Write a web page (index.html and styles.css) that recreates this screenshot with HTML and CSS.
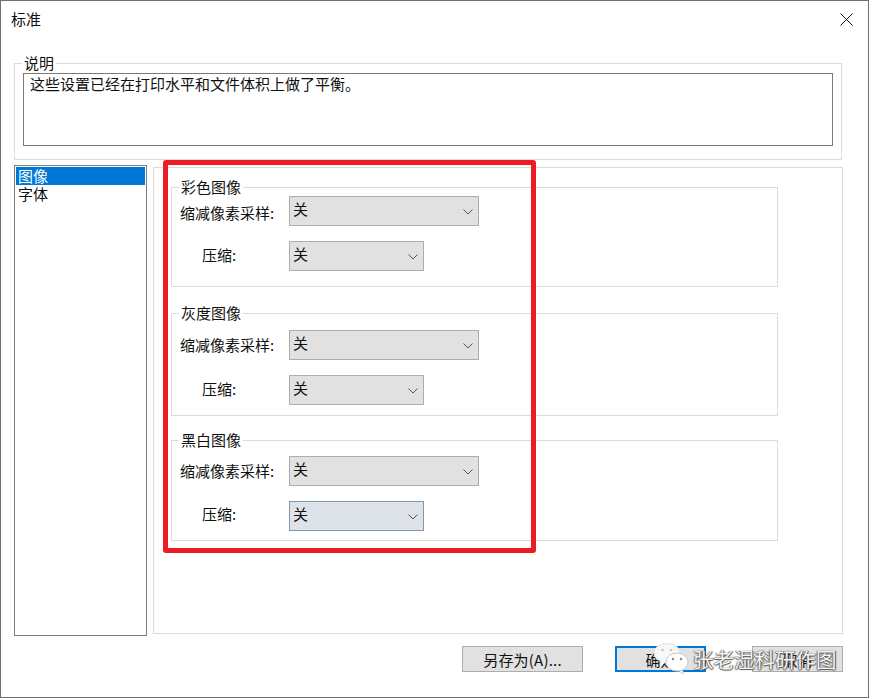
FILE: index.html
```html
<!DOCTYPE html>
<html lang="zh-CN">
<head>
<meta charset="utf-8">
<title>标准</title>
<link rel="stylesheet" href="styles.css">
</head>
<body>
<div class="window">
  <header class="titlebar">
    <span class="title">标准</span>
    <svg class="close" width="13" height="13" viewBox="0 0 13 13"><path d="M0.5 0.5L12.5 12.5M12.5 0.5L0.5 12.5" stroke="#111" stroke-width="1" fill="none"/></svg>
  </header>

  <section class="box desc">
    <div class="legend">说明</div>
    <div class="desc-text">这些设置已经在打印水平和文件体积上做了平衡。</div>
  </section>

  <div class="main">
    <ul class="list">
      <li class="item selected">图像</li>
      <li class="item">字体</li>
    </ul>
    <div class="panel">
      <section class="box group group-one">
        <div class="legend">彩色图像</div>
        <div class="row">
          <span class="label">缩减像素采样:</span>
          <div class="select wide"><span class="value">关</span><svg class="chev" width="10" height="6" viewBox="0 0 10 6"><path d="M0.5 0.5L5 5L9.5 0.5" stroke="#555" fill="none"/></svg></div>
        </div>
        <div class="row">
          <span class="label short">压缩:</span>
          <div class="select"><span class="value">关</span><svg class="chev" width="10" height="6" viewBox="0 0 10 6"><path d="M0.5 0.5L5 5L9.5 0.5" stroke="#555" fill="none"/></svg></div>
        </div>
      </section>
      <section class="box group group-two">
        <div class="legend">灰度图像</div>
        <div class="row">
          <span class="label">缩减像素采样:</span>
          <div class="select wide"><span class="value">关</span><svg class="chev" width="10" height="6" viewBox="0 0 10 6"><path d="M0.5 0.5L5 5L9.5 0.5" stroke="#555" fill="none"/></svg></div>
        </div>
        <div class="row">
          <span class="label short">压缩:</span>
          <div class="select"><span class="value">关</span><svg class="chev" width="10" height="6" viewBox="0 0 10 6"><path d="M0.5 0.5L5 5L9.5 0.5" stroke="#555" fill="none"/></svg></div>
        </div>
      </section>
      <section class="box group group-three">
        <div class="legend">黑白图像</div>
        <div class="row">
          <span class="label">缩减像素采样:</span>
          <div class="select wide"><span class="value">关</span><svg class="chev" width="10" height="6" viewBox="0 0 10 6"><path d="M0.5 0.5L5 5L9.5 0.5" stroke="#555" fill="none"/></svg></div>
        </div>
        <div class="row">
          <span class="label short">压缩:</span>
          <div class="select hover"><span class="value">关</span><svg class="chev" width="10" height="6" viewBox="0 0 10 6"><path d="M0.5 0.5L5 5L9.5 0.5" stroke="#555" fill="none"/></svg></div>
        </div>
      </section>
    </div>
  </div>

  <footer class="footer">
    <button class="btn save">另存为(A)...</button>
    <button class="btn ok">确定</button>
    <button class="btn cancel">取消</button>
  </footer>

  <div class="highlight"></div>

  <div class="watermark">
    <svg class="wm-icon" width="38" height="32" viewBox="0 0 38 32">
      <ellipse cx="15" cy="10" rx="13" ry="9.5" fill="#f8f8f8" stroke="#e2e2e2"/>
      <path d="M9 18L8 24L14 19Z" fill="#f8f8f8"/>
      <circle cx="10.5" cy="7" r="1.3" fill="#c4c4c4"/>
      <circle cx="19" cy="7" r="1.3" fill="#c4c4c4"/>
      <path d="M30 26L32 31L25 27Z" fill="#fff" stroke="#c4c4c4" stroke-width="0.7"/>
      <ellipse cx="25" cy="19" rx="11" ry="9" fill="#fff" stroke="#c8c8c8"/>
      <circle cx="21" cy="16" r="1.2" fill="#888"/>
      <circle cx="29" cy="16" r="1.2" fill="#888"/>
    </svg>
    <span class="wm-text">张老湿科研作图</span>
  </div>
</div>
</body>
</html>
```

FILE: styles.css
```css
* { box-sizing: border-box; }
html, body { margin: 0; padding: 0; }
body {
  font-family: "Noto Sans CJK SC", "Liberation Sans", sans-serif;
  font-size: 15px;
  color: #111;
  background: #fff;
}
.window {
  position: relative;
  width: 869px;
  height: 698px;
  border: 1px solid #6f6f6f;
  background: #fff;
  overflow: hidden;
  display: flex;
  flex-direction: column;
}
.titlebar {
  height: 62px;
  padding: 10px 15px 0 10px;
  display: flex;
  justify-content: space-between;
  align-items: flex-start;
}
.title { line-height: 16px; }
.close { margin-top: 2px; }
.box { border: 1px solid #dcdcdc; }
.legend {
  width: fit-content;
  height: 16px;
  line-height: 16px;
  margin: -9px 0 0 7px;
  padding: 0 2px;
  background: #fff;
}
.desc {
  width: 828px;
  height: 97px;
  margin-left: 13px;
}
.desc-text {
  height: 73px;
  margin: 2px 8px 0;
  padding: 0 6px;
  border: 1px solid #7a7a7a;
  line-height: 19px;
}
.main {
  display: flex;
  gap: 6px;
  margin: 5px 0 0 13px;
}
.list {
  width: 133px;
  height: 471px;
  margin: 0;
  padding: 1px;
  list-style: none;
  border: 1px solid #7b7f82;
}
.item {
  height: 18px;
  line-height: 18px;
  padding-left: 2px;
}
.selected { background: #0078d7; color: #fff; }
.panel {
  width: 690px;
  height: 467px;
  margin-top: 2px;
  padding: 19px 0 0 17px;
  border: 1px solid #dcdcdc;
}
.group {
  width: 607px;
  padding: 0 0 0 8px;
}
.group .legend { margin-left: -1px; }
.group-one { height: 100px; }
.group-two { height: 103px; margin-top: 26px; }
.group-three { height: 101px; margin-top: 24px; }
.group-one .legend { margin-bottom: 1px; }
.group-two .legend { margin-bottom: 9px; }
.group-three .legend { margin-bottom: 8px; }
.row {
  display: flex;
  align-items: center;
  height: 30px;
}
.row + .row { margin-top: 15px; }
.label {
  width: 109px;
  flex: none;
  line-height: 20px;
  margin-top: 0;
}
.group-one .row:nth-child(2) .label { margin-top: 4px; }
.short { padding-left: 22px; margin-top: -2px; }
.group-three .short { margin-top: -4px; }
.select {
  width: 135px;
  height: 30px;
  padding: 0 5px 0 3px;
  display: flex;
  align-items: center;
  justify-content: space-between;
  background: #e1e1e1;
  border: 1px solid #adadad;
}
.wide { width: 190px; }
.hover { background: #dde3e8; border-color: #7e9ab0; }
.value { line-height: 24px; margin-top: -4px; }
.chev { flex: none; margin-top: 2px; }
.footer {
  margin-top: 10px;
  padding-right: 25px;
  display: flex;
  justify-content: flex-end;
  height: 26px;
}
.btn {
  width: 91px;
  height: 26px;
  padding: 0;
  font: inherit;
  color: #111;
  background: #e1e1e1;
  border: 1px solid #adadad;
  border-radius: 0;
}
.save { width: 121px; margin-right: 32px; letter-spacing: 0.2px; }
.ok { border: 2px solid #0078d7; margin-right: 46px; }
.highlight {
  position: absolute;
  left: 162px;
  top: 159px;
  width: 373px;
  height: 393px;
  border: 5px solid #ed1c24;
  border-radius: 3px;
}
.watermark {
  position: absolute;
  left: 651px;
  top: 642px;
  display: flex;
  align-items: center;
  gap: 3px;
}
.wm-text {
  font-size: 20.5px;
  line-height: 30px;
  color: #f4f4f4;
  text-shadow: 1px 0 1px #444, -1px 0 1px #777, 0 1px 1px #555;
  white-space: nowrap;
}
```
